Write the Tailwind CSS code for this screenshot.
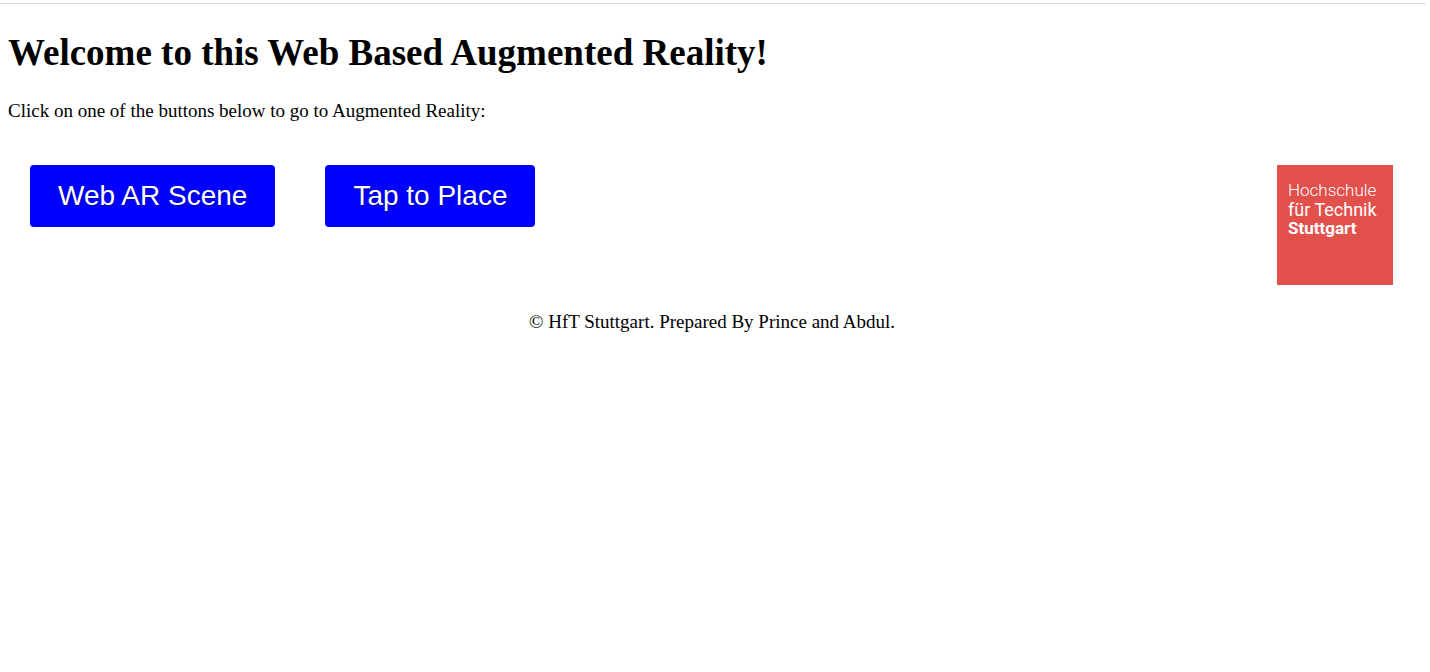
<!DOCTYPE html>
<html lang="en">
<head>
<meta charset="utf-8">
<title>Web Based Augmented Reality</title>
<script src="https://cdn.jsdelivr.net/npm/@tailwindcss/browser@4"></script>
</head>
<body class="bg-white text-black font-['Liberation_Serif',serif]">
<div class="mt-[3px] mr-1 border-t border-[#dcdcdc]"></div>
<main class="px-2 pt-[27px] text-[19px] leading-6">
  <h1 class="text-[37px] leading-[44px] font-bold">Welcome to this Web Based Augmented Reality!</h1>
  <p class="mt-6">Click on one of the buttons below to go to Augmented Reality:</p>
  <div class="mt-[42px] flex items-start pl-[22px] pr-[29px] font-['Liberation_Sans',sans-serif]">
    <button type="button" class="h-[62px] rounded bg-[#0000ff] px-7 text-[28px] text-white text-shadow-[1px_1px_1px_#00006080]">Web AR Scene</button>
    <button type="button" class="ml-[50px] h-[62px] rounded bg-[#0000ff] px-7 text-[28px] text-white text-shadow-[1px_1px_1px_#00006080]">Tap to Place</button>
    <div class="ml-auto h-[120px] w-[116px] bg-[#e2504c] pt-4 pl-[11px] text-[17px] leading-[19px] text-white font-['Roboto',sans-serif]">
      <div class="font-light">Hochschule</div>
      <div class="text-[18px]">für Technik</div>
      <div class="text-[17px] font-bold">Stuttgart</div>
    </div>
  </div>
</main>
<footer class="mt-[25px] pr-[6px] text-center text-[19px] leading-6">© HfT Stuttgart. Prepared By Prince and Abdul.</footer>
</body>
</html>
